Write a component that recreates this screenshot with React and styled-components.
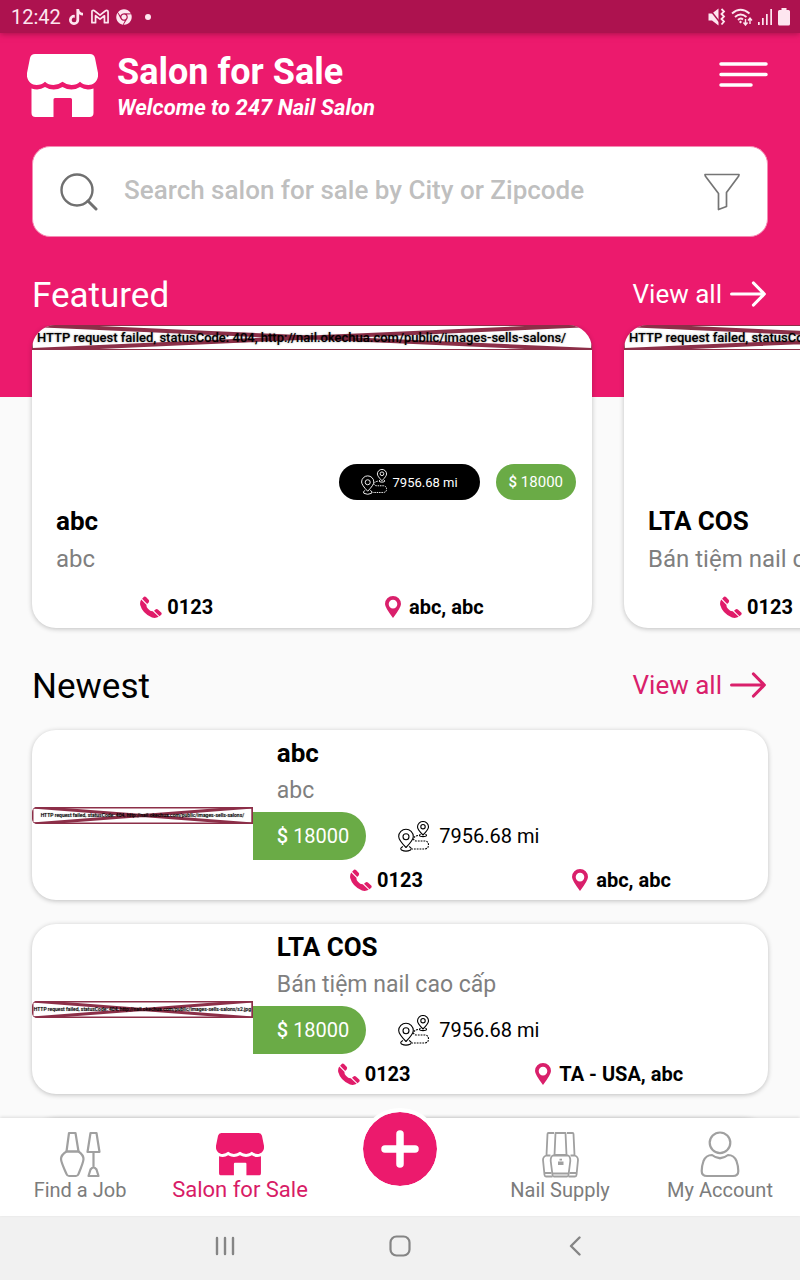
import React from "react";
import styled, { createGlobalStyle, css } from "styled-components";
import { FaTiktok, FaChrome } from "react-icons/fa";

const PINK = "#ec1a6d";

const GlobalStyle = createGlobalStyle`
  *, *::before, *::after { box-sizing: border-box; }
  html, body, #root { height: 100%; }
  body { margin: 0; background: #fafafa; font-family: Roboto, "Noto Sans", sans-serif; color: #000; }
  h1, h2, h3, p { margin: 0; font-weight: 400; }
  button { border: 0; padding: 0; background: none; font: inherit; color: inherit; cursor: pointer; }
  a { color: inherit; text-decoration: none; }
  svg { display: block; flex: none; }
`;

const Screen = styled.div`
  display: flex;
  flex-direction: column;
  height: 100vh;
  overflow: hidden;
`;

const StatusBar = styled.div`
  position: relative;
  z-index: 1;
  flex: none;
  display: flex;
  align-items: center;
  justify-content: space-between;
  height: 33px;
  padding: 0 10px 0 11px;
  background: #ad124f;
  box-shadow: 0 1px 6px rgba(120, 10, 50, 0.6);
  color: #fde6ef;
  font-size: 20px;
`;

const StatusGroup = styled.div`
  display: flex;
  align-items: center;
  gap: ${(p) => p.$gap}px;
`;

const Main = styled.main`
  flex: 1;
  min-height: 0;
  overflow-y: auto;
  scrollbar-width: none;
`;

const Hero = styled.section`
  background: ${PINK};
  padding: 18px 32px 0;
  color: #fff;
`;

const Header = styled.header`
  display: flex;
  align-items: flex-start;
  gap: 19px;
  margin-left: -5px;
`;

const Logo = styled.span`
  padding-top: 3px;
`;

const HeaderText = styled.div`
  flex: 1;
`;

const PageTitle = styled.h1`
  font-size: 36px;
  line-height: 42px;
  font-weight: 700;
`;

const Tagline = styled.p`
  font-size: 22px;
  line-height: 30px;
  font-weight: 700;
  font-style: italic;
`;

const MenuButton = styled.button`
  padding-top: 10px;
`;

const SearchBox = styled.form`
  display: flex;
  align-items: center;
  gap: 26px;
  height: 91px;
  margin-top: 23px;
  padding: 0 27px;
  background: #fff;
  border: 1px solid #f58bb3;
  border-radius: 18px;
  color: #757575;
`;

const SearchInput = styled.input`
  flex: 1;
  min-width: 0;
  padding: 0 0 4px;
  border: 0;
  outline: 0;
  background: none;
  font: 500 26px/32px Roboto, sans-serif;
  color: #444;
  &::placeholder { color: #bfbfbf; opacity: 1; }
`;

const SectionHead = styled.div`
  display: flex;
  align-items: center;
  justify-content: space-between;
  padding: ${(p) => p.$pad};
  line-height: 48px;
`;

const SectionTitle = styled.h2`
  padding-top: 4px;
  font-size: 35px;
  line-height: 44px;
`;

const ViewAll = styled.a`
  display: flex;
  align-items: center;
  gap: 8px;
  padding-right: 2px;
  font-size: 26px;
  color: ${(p) => p.$color};
`;

const Carousel = styled.div`
  display: flex;
  gap: 32px;
  padding: 0 32px 33px;
  overflow-x: auto;
  scrollbar-width: none;
  background: linear-gradient(${PINK} 72px, transparent 72px);
`;

const cardSurface = css`
  background: #fff;
  border-radius: 24px;
  box-shadow: 0 1px 5px rgba(0, 0, 0, 0.24);
  overflow: hidden;
`;

const FeaturedCard = styled.article`
  ${cardSurface}
  flex: none;
  width: 70vw;
  padding-bottom: 8px;
`;

const FeaturedMedia = styled.div`
  display: flex;
  flex-direction: column;
  justify-content: space-between;
  height: 175px;
`;

const Pills = styled.div`
  display: flex;
  justify-content: flex-end;
  gap: 16px;
  padding-right: 16px;
`;

const Pill = styled.span`
  display: flex;
  align-items: center;
  gap: 6px;
  height: 36px;
  padding: 0 ${(p) => p.$pad}px;
  border-radius: 18px;
  background: ${(p) => p.$bg};
  color: #fff;
  font-size: ${(p) => p.$size}px;
`;

const FeaturedText = styled.div`
  padding: 2px 24px 16px;
  line-height: 38px;
  white-space: nowrap;
`;

const CardTitle = styled.h3`
  font-size: 26px;
  font-weight: 700;
`;

const CardSub = styled.p`
  font-size: ${(p) => (p.$large ? 24 : 23)}px;
  color: #7f7f7f;
`;

const MetaRow = styled.div`
  display: flex;
  justify-content: space-around;
  padding: 0 24px;
  font-size: 20px;
  line-height: 26px;
  font-weight: 700;
  white-space: nowrap;
`;

const MetaItem = styled.span`
  display: flex;
  align-items: center;
  gap: ${(p) => p.$gap}px;
`;

const PhoneItem = styled(MetaItem)`
  padding-right: 3px;
`;

const List = styled.div`
  display: grid;
  gap: 24px;
  padding: 21px 32px 24px;
`;

const ListCard = styled.article`
  ${cardSurface}
  display: grid;
  grid-template-columns: 3fr 7fr;
  align-items: center;
  min-height: 170px;
`;

const ListBody = styled.div`
  min-width: 0;
  padding-bottom: 2px;
`;

const ListText = styled.div`
  padding: 0 24px;
  line-height: 37px;
`;

const PriceRow = styled.div`
  display: flex;
  align-items: center;
  gap: 32px;
  margin: 3px 0 7px;
  font-size: 20px;
`;

const PriceTag = styled.span`
  padding: 0 17px 0 24px;
  line-height: 48px;
  border-radius: 0 24px 24px 0;
  background: #6aab46;
  color: #fff;
`;

const Currency = styled.span`
  font-weight: 500;
`;

const Distance = styled.span`
  display: flex;
  align-items: center;
  gap: 10px;
`;

const Broken = styled.div`
  display: grid;
  height: ${(p) => (p.$small ? 17 : 25)}px;
  overflow: hidden;
  border-radius: ${(p) => (p.$small ? "5px 0 0 5px" : "0")};
  font-size: ${(p) => p.$size}px;
  line-height: ${(p) => (p.$small ? 17 : 25)}px;
  font-weight: 500;
  text-align: ${(p) => (p.$small ? "center" : "left")};
  white-space: nowrap;
  text-shadow: 0 0 ${(p) => (p.$small ? 1 : 2)}px rgba(0, 0, 0, 0.5);
  & > * { grid-area: 1 / 1; width: 100%; height: 100%; min-width: 0; position: relative; }
  & > span { padding-left: ${(p) => (p.$small ? 0 : 5)}px; }
`;

const BottomNav = styled.nav`
  position: relative;
  flex: none;
  display: grid;
  grid-template-columns: repeat(5, 1fr);
  height: 98px;
  background: #fff;
  box-shadow: 0 -1px 3px rgba(0, 0, 0, 0.12);
`;

const NavItem = styled.a`
  display: flex;
  flex-direction: column;
  align-items: center;
  padding-top: 12px;
  font-size: ${(p) => (p.$active ? 22 : 20)}px;
  line-height: 24px;
  color: ${(p) => (p.$active ? "#d81b66" : "#7c7c7c")};
  white-space: nowrap;
  & > svg { height: 48px; }
`;

const AddButton = styled.button`
  position: relative;
  justify-self: center;
  display: grid;
  place-items: center;
  width: 82px;
  height: 82px;
  margin-top: -10px;
  border: 4px solid #fff;
  border-radius: 50%;
  background: ${PINK};
  background-clip: padding-box;
`;

const SystemBar = styled.div`
  flex: none;
  display: grid;
  grid-template-columns: repeat(3, 175px);
  justify-content: center;
  height: 64px;
  background: #f1f1f1;
  color: #858585;
`;

const SystemButton = styled.button`
  display: grid;
  place-items: center;
  padding-bottom: 4px;
`;

const GmailIcon = () => (
  <svg width="18" height="15" viewBox="0 0 19 15" fill="none" stroke="currentColor" strokeWidth="1.800" strokeLinejoin="round">
    <path d="M1 2.5Q1 1 2.5 1Q3.2 1 4 1.7L9.5 6L15 1.7Q15.8 1 16.5 1Q18 1 18 2.5V14H14.2V6.7L9.5 10.3L4.8 6.7V14H1Z" />
  </svg>
);

const MuteIcon = () => (
  <svg width="18" height="18" viewBox="0 0 18 18">
    <path d="M0.500 5.500H4L10.500 0.500V17.500L4 12.500H0.500Z" fill="currentColor" />
    <path d="M1 0.500L12 14.500" stroke="#ad124f" strokeWidth="1.400" />
    <path d="M13.500 1L16 3.500L13.500 6L16 8.500L13.500 11L16 13.500L13.500 16.500" fill="none" stroke="currentColor" strokeWidth="1.800" />
  </svg>
);

const WifiIcon = () => (
  <svg width="22" height="18" viewBox="0 0 22 18" fill="none" stroke="currentColor" strokeWidth="1.900">
    <path d="M1 5.500Q9.500-2 18.500 5.500M4 9Q9.500 4 15.500 9M7 12Q9.500 9.500 12 11.500" />
    <path d="M9.500 12.500L11 14L9.500 15.500L8 14Z" fill="currentColor" stroke="none" />
    <path d="M14.500 11V17M12.500 14.500L14.500 17L16.500 14.500M19 16V10M17 12.500L19 10L21 12.500" strokeWidth="1.400" />
  </svg>
);

const SignalIcon = () => (
  <svg width="15" height="16" viewBox="0 0 15 16" fill="currentColor">
    <path d="M0 13H1.700V16H0ZM4 9H5.700V16H4ZM8 5H9.700V16H8ZM12.300 0H14V16H12.300Z" />
  </svg>
);

const BatteryIcon = () => (
  <svg width="12" height="18" viewBox="0 0 12 18" fill="currentColor">
    <path d="M3.500 0H8.500V2H10.500Q12 2 12 3.500V16Q12 17.500 10.500 17.500H1.500Q0 17.500 0 16V3.500Q0 2 1.500 2H3.500Z" />
  </svg>
);

const ShopIcon = ({ width, height }) => (
  <svg width={width} height={height} viewBox="0 0 71 63" fill="currentColor">
    <path d="M8 0H63Q67 0 68 4L71 19C72 26 67 31 61.500 31Q56.500 31 53 27.800Q49.500 31 44.500 31Q39.500 31 35.500 27.800Q31.500 31 26.500 31Q21.500 31 18 27.800Q14.500 31 9.500 31C4 31-1 26 0 19L3 4Q4 0 8 0Z" />
    <path d="M4.500 34.500Q12 37 18 33Q26.500 38 35.500 33Q44.500 38 53 33Q59 37 66.500 34.500V59Q66.500 63 62.500 63H45V45.500Q45 44 43.500 44H28Q26.500 44 26.500 45.500V63H8.500Q4.500 63 4.500 59Z" />
  </svg>
);

const SearchIcon = () => (
  <svg width="38" height="38" viewBox="0 0 38 38" fill="none" stroke="#707070" strokeWidth="2.400" strokeLinecap="round">
    <circle cx="17" cy="17" r="15.500" />
    <path d="M28 28L36 36" strokeWidth="3" />
  </svg>
);

const FilterIcon = () => (
  <svg width="36" height="38" viewBox="0 0 36 38" fill="none" stroke="#757575" strokeWidth="1.700" strokeLinejoin="round">
    <path d="M1 1.500H35Q35 3 34 4L22.500 19.500V33.500L14.500 36.500V20.500L2 4Q1 3 1 1.500Z" />
  </svg>
);

const ArrowIcon = () => (
  <svg width="36" height="26" viewBox="0 0 36 26" fill="none" stroke="currentColor" strokeWidth="3.200" strokeLinecap="round" strokeLinejoin="round">
    <path d="M1.600 13H33M23.500 2L34.300 13L23.500 24" />
  </svg>
);

const RouteIcon = ({ size }) => (
  <svg width={size} height={size} viewBox="0 0 31 31" fill="none" stroke="currentColor" strokeWidth="1.100" strokeLinejoin="round">
    <path d="M8 26.500Q0.700 19 0.700 15.500A7.300 7.300 0 0 1 15.300 15.500Q15.300 19 8 26.500Z" />
    <circle cx="8" cy="15.800" r="3" />
    <path d="M5 25.500Q1.500 27 3.500 29Q8 31.300 12.500 29Q14.500 27 11 25.500" />
    <path d="M25 14Q19.500 8.500 19.500 6A5.500 5.500 0 0 1 30.500 6Q30.500 8.500 25 14Z" />
    <circle cx="25" cy="5.700" r="2.200" />
    <path d="M22.500 13.200Q20.500 14.500 22.500 15.300Q25 16 27.500 15.300Q29.500 14.500 27.500 13.200" />
    <path d="M20 14.500Q15.500 15.500 15.500 18Q16 20 19 20H27Q30.500 20.500 30.500 24T27 28H14" strokeDasharray="1.800 1" />
  </svg>
);

const PhoneIcon = () => (
  <svg width="22" height="22" viewBox="0 0 22 22" fill="#e01c69">
    <path d="M1.200 3.600L6.600 9Q6 10.800 8 12.700Q10.500 15.500 12.800 15.200L18.700 20.800Q15.500 22.700 12 21.500Q2.500 17.500.2 9Q-.3 6 1.200 3.600Z" />
    <path d="M2.100 2.800L4 .8Q5 .1 6 1.100L8.800 4Q9.600 5 8.700 6.200L7.200 7.900Z" />
    <path d="M14 14.800L15.900 13.200Q16.900 12.500 17.900 13.400L21.200 16.600Q22.200 17.600 21.200 18.700L19.500 20.200Z" />
  </svg>
);

const PinIcon = () => (
  <svg width="16" height="22" viewBox="0 0 16 22" fill="#d9206b">
    <path fillRule="evenodd" d="M8 0A8 8 0 0 1 16 8Q16 11.500 8 22Q0 11.500 0 8A8 8 0 0 1 8 0ZM8 3.800A4.300 4.300 0 1 0 8 12.400A4.300 4.300 0 1 0 8 3.800Z" />
  </svg>
);

const PolishIcon = () => (
  <svg width="42" height="48" viewBox="0 0 42 48" fill="none" stroke="#a0a0a0" strokeWidth="2.200" strokeLinejoin="round">
    <path d="M10 3H16.500L19.500 21.500H7.500Z" />
    <path d="M7.500 21.500H19.500Q24.500 25 24.500 29Q24.500 32 19.500 44Q18.800 46 17 46H10Q8.200 46 7.500 44Q2 32 2 29Q2 25 7.500 21.500Z" />
    <path d="M31.500 3H37.500L40.500 22H28.500ZM34.500 22V37M31.500 39.500Q34.500 35.500 37.500 39.500L39.500 46H29.500Z" />
  </svg>
);

const SupplyIcon = () => (
  <svg width="37" height="48" viewBox="0 0 37 48" fill="none" stroke="#a0a0a0" strokeWidth="1.800" strokeLinejoin="round">
    <path d="M13.500 3H23.500L24.500 25H12.500ZM12 3H6.500Q5.500 3 5.500 4L4.500 25M25 3H30.500Q31.500 3 31.500 4L32.500 25" />
    <path d="M11 25.500H26Q28.500 26.500 28.300 31L26.500 45Q26.300 46.500 25 46.500H12Q10.700 46.500 10.500 45L8.700 31Q8.500 26.500 11 25.500Z" />
    <path d="M8.500 25.500H4.500Q1 26.500 1 30L2.500 45Q2.700 46.500 4 46.500H10.500M28.500 25.500H32.500Q36 26.500 36 30L34.500 45Q34.300 46.500 33 46.500H26.500M3 43H9.500M27.500 43H34M11 43.500H26" />
    <path d="M16 32.300H21.500M16 34.200H21.500M17.500 29.700H20" />
  </svg>
);

const AccountIcon = () => (
  <svg width="40" height="48" viewBox="0 0 40 48" fill="none" stroke="#a0a0a0" strokeWidth="2.200" strokeLinejoin="round">
    <circle cx="20" cy="12.800" r="10.300" />
    <path d="M12 25Q20 31.500 28 25Q34 25 36.500 31Q38.300 36 38.300 41Q38.300 46 33 46H7Q1.700 46 1.700 41Q1.700 36 3.500 31Q6 25 12 25Z" />
  </svg>
);

function BrokenImage({ url, size, small }) {
  return (
    <Broken $small={small} $size={size}>
      <svg viewBox="0 0 560 25" preserveAspectRatio="none" fill="none" stroke="#8c2f48">
        <path d="M0 0L560 25M0 25L560 0" strokeWidth={small ? 3 : 4} vectorEffect="non-scaling-stroke" />
        <path d="M0 0H560V25H0Z" strokeWidth={small ? 3 : 2} vectorEffect="non-scaling-stroke" />
      </svg>
      <span>HTTP request failed, statusCode: 404, {url}</span>
    </Broken>
  );
}

function Meta({ phone, place }) {
  return (
    <MetaRow>
      <PhoneItem $gap={5}><PhoneIcon />{phone}</PhoneItem>
      <MetaItem $gap={8}><PinIcon />{place}</MetaItem>
    </MetaRow>
  );
}

const BASE = "http://nail.okechua.com/public/images-sells-salons/";
const salons = [
  { name: "abc", about: "abc", place: "abc, abc", url: BASE },
  { name: "LTA COS", about: "Bán tiệm nail cao cấp", place: "TA - USA, abc", url: BASE + "s2.jpg" },
];

export default function App() {
  return (
    <Screen>
      <GlobalStyle />
      <StatusBar>
        <StatusGroup $gap={7}>
          12:42
          <FaTiktok size={16} />
          <GmailIcon />
          <FaChrome size={16} />
          <svg width="22" height="6" viewBox="0 0 22 6" fill="currentColor"><circle cx="9" cy="3" r="3" /></svg>
        </StatusGroup>
        <StatusGroup $gap={5}>
          <MuteIcon />
          <WifiIcon />
          <SignalIcon />
          <BatteryIcon />
        </StatusGroup>
      </StatusBar>

      <Main>
        <Hero>
          <Header>
            <Logo><ShopIcon width={71} height={63} /></Logo>
            <HeaderText>
              <PageTitle>Salon for Sale</PageTitle>
              <Tagline>Welcome to 247 Nail Salon</Tagline>
            </HeaderText>
            <MenuButton aria-label="Menu">
              <svg width="49" height="27" viewBox="0 0 49 27" stroke="#fff" strokeWidth="3.500" strokeLinecap="round">
                <path d="M2 3H47M2 13.500H47M2 24H32" />
              </svg>
            </MenuButton>
          </Header>
          <SearchBox onSubmit={(e) => e.preventDefault()}>
            <SearchIcon />
            <SearchInput type="text" aria-label="Search salon for sale" placeholder="Search salon for sale by City or Zipcode" />
            <button type="button" aria-label="Filter"><FilterIcon /></button>
          </SearchBox>
          <SectionHead $pad="33px 0 7px">
            <SectionTitle>Featured</SectionTitle>
            <ViewAll href="#featured" $color="#fff">View all <ArrowIcon /></ViewAll>
          </SectionHead>
        </Hero>

        <Carousel>
          {salons.map((s, i) => (
            <FeaturedCard key={s.name}>
              <FeaturedMedia>
                <BrokenImage url={s.url} size={13} />
                {i === 0 && (
                  <Pills>
                    <Pill $bg="#000" $pad={22} $size={13}><RouteIcon size={26} />7956.68 mi</Pill>
                    <Pill $bg="#6aab46" $pad={13} $size={15}><span><Currency>$</Currency> 18000</span></Pill>
                  </Pills>
                )}
              </FeaturedMedia>
              <FeaturedText>
                <CardTitle>{s.name}</CardTitle>
                <CardSub $large>{s.about}</CardSub>
              </FeaturedText>
              <Meta phone="0123" place={s.place} />
            </FeaturedCard>
          ))}
        </Carousel>

        <SectionHead $pad="0 32px">
          <SectionTitle>Newest</SectionTitle>
          <ViewAll href="#newest" $color="#d9206b">View all <ArrowIcon /></ViewAll>
        </SectionHead>
        <List>
          {salons.map((s) => (
            <ListCard key={s.name}>
              <BrokenImage url={s.url} size={5} small />
              <ListBody>
                <ListText>
                  <CardTitle>{s.name}</CardTitle>
                  <CardSub>{s.about}</CardSub>
                </ListText>
                <PriceRow>
                  <PriceTag><Currency>$</Currency> 18000</PriceTag>
                  <Distance><RouteIcon size={31} />7956.68 mi</Distance>
                </PriceRow>
                <Meta phone="0123" place={s.place} />
              </ListBody>
            </ListCard>
          ))}
          <ListCard aria-hidden="true" />
        </List>
      </Main>

      <BottomNav>
        <NavItem href="#jobs"><PolishIcon />Find a Job</NavItem>
        <NavItem href="#salons" $active>
          <svg width="48" height="48" viewBox="0 0 48 48" color={PINK}>
            <g transform="translate(0 3) scale(0.676)">
              <ShopIcon width={71} height={63} />
            </g>
          </svg>
          Salon for Sale
        </NavItem>
        <AddButton aria-label="Add salon">
          <svg width="38" height="38" viewBox="0 0 38 38" stroke="#fff" strokeWidth="7.500" strokeLinecap="round">
            <path d="M19 4V34M4 19H34" />
          </svg>
        </AddButton>
        <NavItem href="#supply"><SupplyIcon />Nail Supply</NavItem>
        <NavItem href="#account"><AccountIcon />My Account</NavItem>
      </BottomNav>

      <SystemBar>
        <SystemButton aria-label="Recent apps">
          <svg width="20" height="20" viewBox="0 0 20 20" stroke="currentColor" strokeWidth="2.400" strokeLinecap="round"><path d="M2 2V18M10 2V18M18 2V18" /></svg>
        </SystemButton>
        <SystemButton aria-label="Home">
          <svg width="22" height="22" viewBox="0 0 22 22" fill="none" stroke="currentColor" strokeWidth="2.200"><rect x="1.500" y="1.500" width="19" height="19" rx="6" /></svg>
        </SystemButton>
        <SystemButton aria-label="Back">
          <svg width="12" height="20" viewBox="0 0 12 20" fill="none" stroke="currentColor" strokeWidth="2.400" strokeLinecap="round" strokeLinejoin="round"><path d="M10.500 1.500L2 10L10.500 18.500" /></svg>
        </SystemButton>
      </SystemBar>
    </Screen>
  );
}
